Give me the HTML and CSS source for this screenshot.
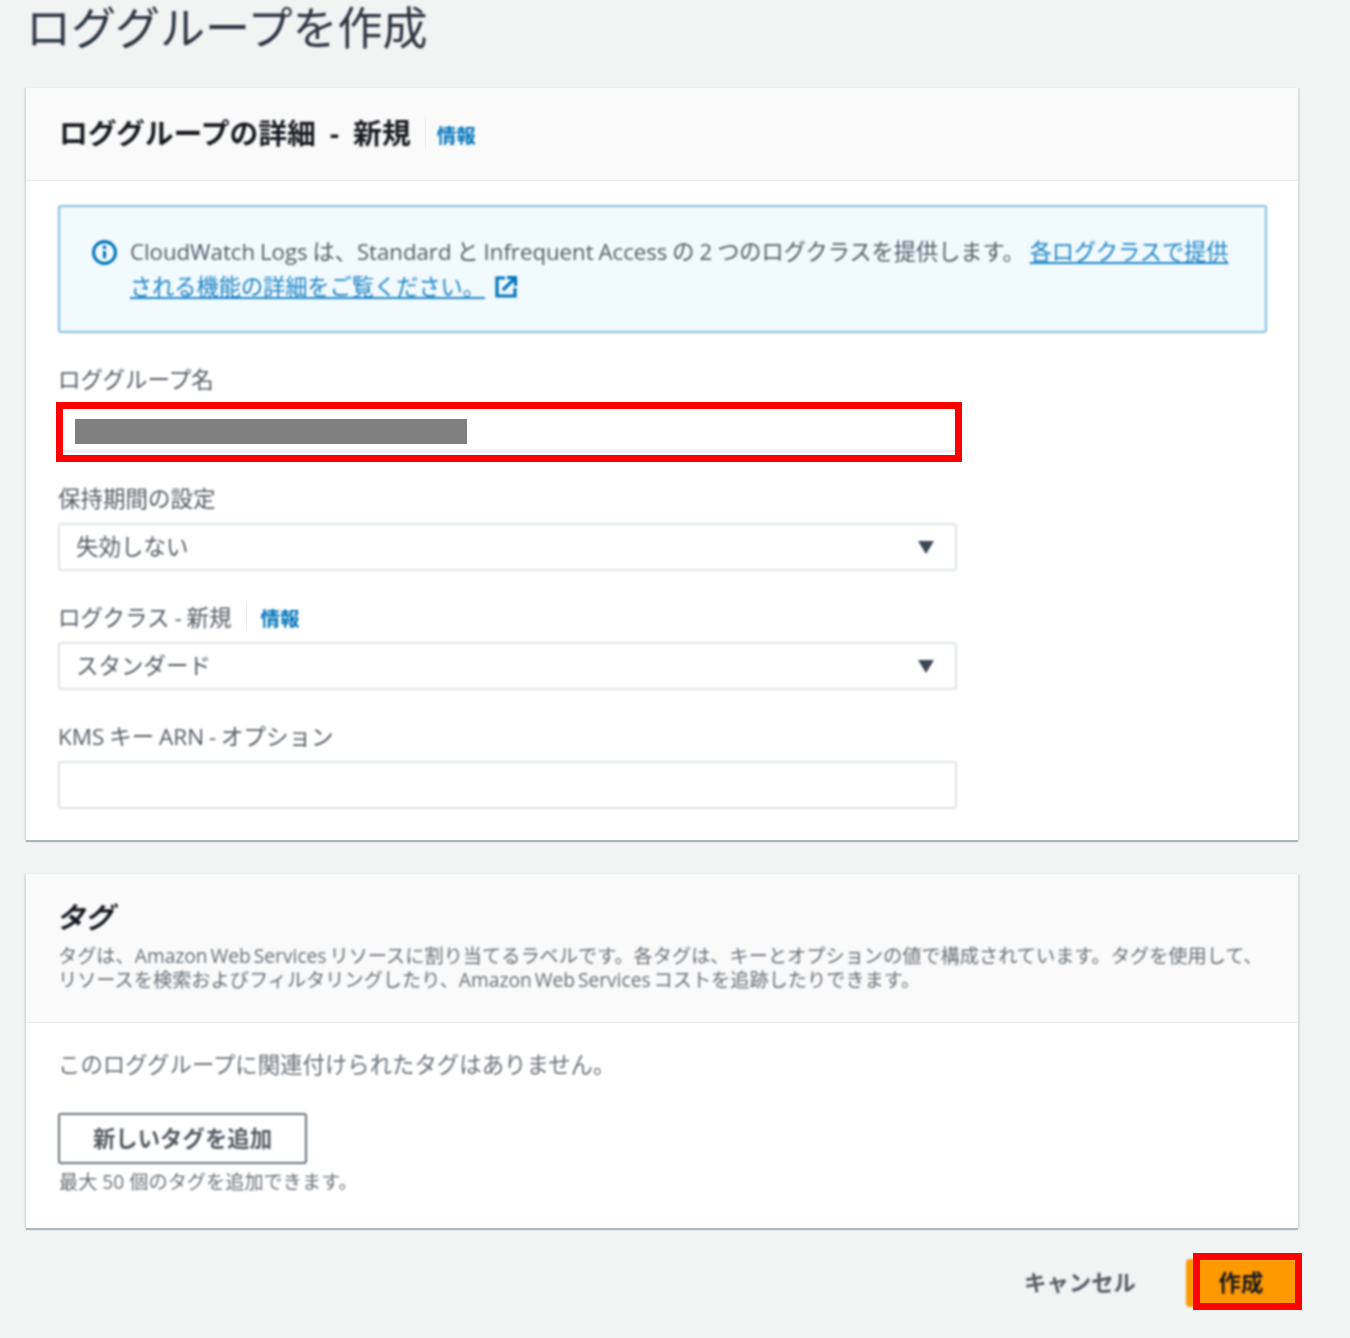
FILE: index.html
```html
<!DOCTYPE html>
<html lang="ja">
<head>
<meta charset="utf-8">
<title>ロググループを作成</title>
<link rel="stylesheet" href="styles.css">
</head>
<body>
<main class="page">
  <h1 class="title soft">ロググループを作成</h1>

  <section class="card">
    <header class="card-head head-details">
      <h2 class="card-title spaced soft">ロググループの詳細 - 新規</h2>
      <span class="divider"></span>
      <a class="info info-head soft">情報</a>
    </header>
    <div class="card-body body-details">
      <div class="alert soft">
        <svg class="alert-icon" viewBox="0 0 24 24" aria-hidden="true">
          <circle cx="12" cy="12" r="10.5" fill="none" stroke="#0073bb" stroke-width="3"/>
          <path d="M12 10.5v7" stroke="#0073bb" stroke-width="3" fill="none"/>
          <circle cx="12" cy="7" r="1.8" fill="#0073bb"/>
        </svg>
        <p class="alert-text">CloudWatch Logs は、Standard と Infrequent Access の 2 つのログクラスを提供します。 <a class="link">各ログクラスで提供される機能の詳細をご覧ください。</a><svg class="ext-icon" viewBox="0 0 24 24" aria-hidden="true"><path d="M11 3H3v18h18v-8" fill="none" stroke="#0073bb" stroke-width="3.2"/><path d="M9 15L21 3M13 2.5h8.5V11" fill="none" stroke="#0073bb" stroke-width="3.2"/></svg></p>
      </div>

      <div class="field">
        <label class="label soft">ロググループ名</label>
        <div class="input-wrap">
          <div class="control soft"></div>
          <span class="redaction"></span>
          <span class="highlight highlight-input"></span>
        </div>
      </div>

      <div class="field">
        <label class="label soft">保持期間の設定</label>
        <div class="control select soft"><span>失効しない</span><span class="caret"></span></div>
      </div>

      <div class="field">
        <div class="label-row">
          <label class="label soft">ログクラス - 新規</label>
          <span class="divider divider-sm"></span>
          <a class="info info-row soft">情報</a>
        </div>
        <div class="control select soft"><span>スタンダード</span><span class="caret"></span></div>
      </div>

      <div class="field">
        <label class="label soft">KMS キー ARN - オプション</label>
        <div class="control soft"></div>
      </div>
    </div>
  </section>

  <section class="card">
    <header class="card-head head-tags">
      <h2 class="card-title tags-title soft">タグ</h2>
      <p class="desc soft">タグは、Amazon Web Services リソースに割り当てるラベルです。各タグは、キーとオプションの値で構成されています。タグを使用して、リソースを検索およびフィルタリングしたり、Amazon Web Services コストを追跡したりできます。</p>
    </header>
    <div class="card-body body-tags">
      <p class="empty soft">このロググループに関連付けられたタグはありません。</p>
      <button class="btn-add soft" type="button">新しいタグを追加</button>
      <p class="hint soft">最大 50 個のタグを追加できます。</p>
    </div>
  </section>

  <footer class="actions">
    <a class="cancel soft">キャンセル</a>
    <div class="submit-wrap">
      <button class="btn-primary soft" type="button">作成</button>
      <span class="highlight highlight-submit"></span>
    </div>
  </footer>
</main>
</body>
</html>
```

FILE: styles.css
```css
* { box-sizing: border-box; }

html, body {
  margin: 0;
  height: 1338px;
  overflow: hidden;
  background: #f2f3f3;
}

body {
  font-family: "Open Sans", "Noto Sans CJK JP", sans-serif;
  color: #545b64;
}

.soft { filter: blur(0.8px); }

.page {
  width: 1272px;
  margin-left: 26px;
}

.title {
  height: 88px;
  margin: 0;
  font-size: 45px;
  font-weight: 400;
  line-height: 56px;
  color: #2b3440;
}

.card {
  background: #fff;
  box-shadow: 0 2px 1px 0 #aab7b8, 2px 0 1px #e1e4e4, -2px 0 1px #e1e4e4;
  margin-bottom: 34px;
}

.card-head {
  background: #fafafa;
  border-bottom: 1px solid #eaeded;
}

.head-details {
  height: 93px;
  display: flex;
  align-items: center;
  padding: 0 32px 2px 33px;
}

.card-title {
  margin: 0;
  font-size: 28.8px;
  font-weight: 700;
  line-height: 36px;
  color: #16191f;
}

.spaced { word-spacing: 6.5px; }

.divider {
  width: 1px;
  height: 32px;
  margin: 0 11px 0 14px;
  background: #eaeded;
}

.divider-sm {
  height: 28px;
  margin: 0 14px 0 14px;
}

.info {
  font-size: 19.5px;
  font-weight: 700;
  line-height: 28px;
  color: #0073bb;
}

.info-head { margin-top: 6px; }

.info-row { margin-top: 2px; }

.card-body { padding: 0 32px; }

.body-details {
  height: 659px;
  padding-top: 24px;
}

.alert {
  width: 1209px;
  height: 128px;
  display: flex;
  align-items: flex-start;
  gap: 13px;
  padding: 27px 30px 0 32px;
  background: #f1faff;
  border: 2px solid #84bde0;
  border-radius: 3px;
}

.alert-icon {
  flex: none;
  width: 25px;
  height: 25px;
  margin-top: 6px;
}

.alert-text {
  margin: 0;
  font-size: 22.2px;
  line-height: 35px;
  word-spacing: -0.8px;
  color: #545b64;
}

.link {
  color: #1f83c4;
  text-decoration: underline;
}

.ext-icon {
  width: 24px;
  height: 24px;
  margin-left: 9px;
  vertical-align: -4px;
}

.field {
  width: 899px;
  margin-top: 32px;
}

.label {
  display: block;
  height: 30px;
  margin-bottom: 9px;
  font-size: 22.5px;
  line-height: 29px;
  word-spacing: -1px;
  color: #545b64;
}

.label-row {
  display: flex;
  align-items: flex-start;
  height: 30px;
  margin-bottom: 9px;
}

.label-row .label { margin: 0; }

.control {
  height: 48px;
  background: #fff;
  border: 2px solid #dfe4e5;
  border-radius: 3px;
}

.select {
  display: flex;
  align-items: center;
  justify-content: space-between;
  padding: 0 21px 4px 16px;
  font-size: 22.5px;
  color: #545b64;
}

.caret {
  width: 0;
  height: 0;
  margin-top: 4px;
  border-left: 8px solid transparent;
  border-right: 8px solid transparent;
  border-top: 13px solid #3d4654;
}

.input-wrap { position: relative; }

.redaction {
  position: absolute;
  left: 17px;
  top: 15px;
  width: 392px;
  height: 25px;
  background: #808080;
}

.highlight {
  position: absolute;
  border: 7px solid #ff0000;
}

.highlight-input {
  left: -2px;
  top: -2px;
  width: 906px;
  height: 60px;
}

.head-tags {
  height: 149px;
  padding: 25px 20px 0 33px;
}

.tags-title {
  margin-left: -3px;
  font-style: italic;
  line-height: 36px;
}

.desc {
  margin: 9px 0 0 -1px;
  font-size: 19.2px;
  line-height: 24px;
  word-spacing: -2px;
  color: #687078;
}

.body-tags {
  height: 205px;
  padding-top: 26px;
}

.empty {
  margin: 0;
  height: 32px;
  font-size: 22.4px;
  line-height: 32px;
  color: #687078;
}

.btn-add {
  display: block;
  width: 249px;
  height: 51px;
  margin-top: 32px;
  padding: 0;
  background: #fff;
  border: 2px solid #687078;
  border-radius: 3px;
  font: 700 22.4px/30px "Open Sans", "Noto Sans CJK JP", sans-serif;
  color: #545b64;
}

.hint {
  margin: 4px 0 0 1px;
  font-size: 19.2px;
  line-height: 28px;
  color: #687078;
}

.actions {
  display: flex;
  align-items: center;
  justify-content: flex-end;
  height: 48px;
  margin-top: -3px;
  padding-right: 2px;
  gap: 50px;
}

.cancel {
  margin-bottom: 4px;
  font-size: 22.4px;
  font-weight: 700;
  color: #545b64;
}

.submit-wrap {
  position: relative;
  width: 110px;
  height: 48px;
}

.btn-primary {
  display: block;
  width: 110px;
  height: 48px;
  padding: 0;
  background: #ff9900;
  border: 0;
  border-radius: 4px;
  font: 700 22.4px/30px "Open Sans", "Noto Sans CJK JP", sans-serif;
  color: #16191f;
}

.highlight-submit {
  left: 7px;
  top: -6px;
  width: 109px;
  height: 57px;
}
```
